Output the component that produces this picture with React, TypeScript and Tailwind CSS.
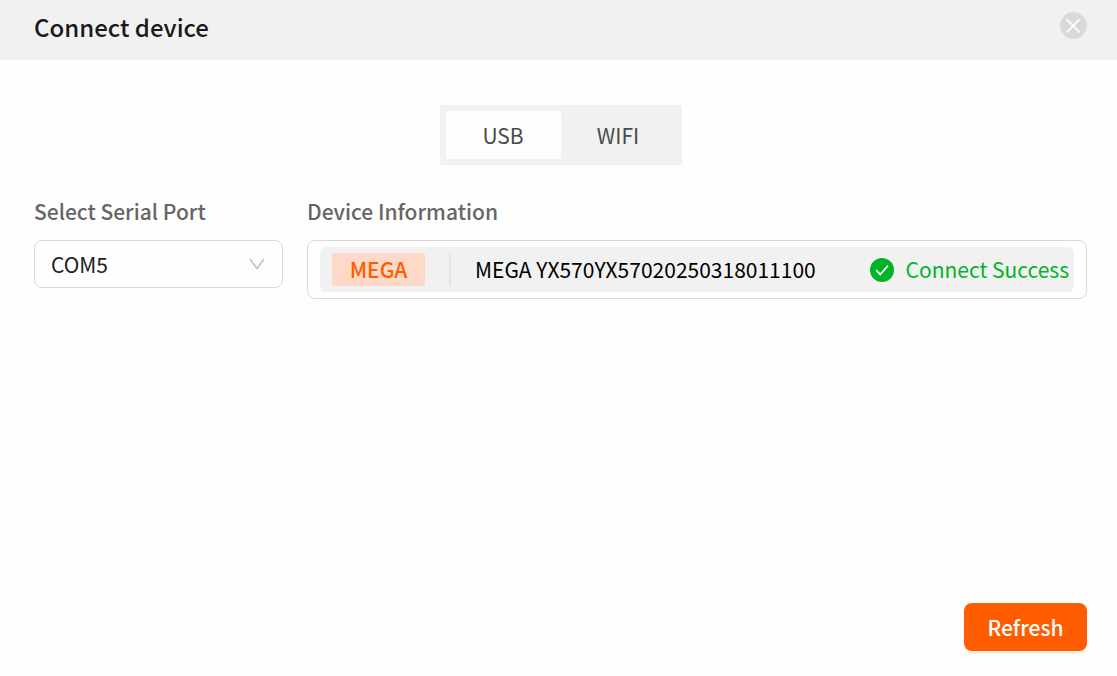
import { useState } from 'react';

const tabs = ['USB', 'WIFI'];
const ports = ['COM5'];

function CloseIcon() {
  return (
    <svg viewBox="0 0 27 27" className="size-[27px]" aria-hidden="true">
      <circle cx="13.5" cy="13.5" r="13.5" fill="#d9d9d9" />
      <path d="M6.6 7.4 19.6 20.4M19.6 7.4 6.6 20.4" stroke="#fff" strokeWidth="1.7" fill="none" />
    </svg>
  );
}

function SuccessIcon() {
  return (
    <svg viewBox="0 0 24 24" className="size-6 shrink-0" aria-hidden="true">
      <circle cx="12" cy="12" r="12" fill="#00b42a" />
      <path d="m6.2 12.2 4 4.3L18 7.6" stroke="#fff" strokeWidth="1.7" fill="none" />
    </svg>
  );
}

export default function App() {
  const [active, setActive] = useState('USB');
  const [port, setPort] = useState('COM5');

  return (
    <div className="flex min-h-screen flex-col bg-[#fefefe] font-['Noto_Sans_CJK_SC',sans-serif] text-[21px] leading-[30px]">
      <header className="flex h-[60px] items-start justify-between bg-[#f1f1f1] pt-3 pr-[30px] pl-[34px]">
        <h1 className="text-[24px] leading-[30px] font-medium text-[#1a1a1a]">Connect device</h1>
        <button type="button" aria-label="Close" className="cursor-pointer">
          <CloseIcon />
        </button>
      </header>

      <main className="flex flex-1 flex-col pt-[45px] pr-[30px] pb-[25px] pl-[34px]">
        <div className="flex self-center rounded-xs bg-[#f1f1f1] p-[6px]">
          {tabs.map((tab) => (
            <button
              key={tab}
              type="button"
              aria-pressed={active === tab}
              onClick={() => setActive(tab)}
              className={`h-12 w-[115px] cursor-pointer rounded-xs text-[#4a4a4a] ${
                active === tab ? 'bg-[#fefefe]' : ''
              }`}
            >
              {tab}
            </button>
          ))}
        </div>

        <div className="mt-[31px] flex items-start gap-6">
          <div className="flex w-[249px] shrink-0 flex-col gap-[14px]">
            <label htmlFor="port" className="font-medium text-[#666]">
              Select Serial Port
            </label>
            <div className="grid items-center">
              <select
                id="port"
                value={port}
                onChange={(e) => setPort(e.target.value)}
                className="col-start-1 row-start-1 h-12 w-full appearance-none rounded-lg border border-[#d9d9d9] bg-[#fefefe] px-4 text-[#222]"
              >
                {ports.map((p) => (
                  <option key={p}>{p}</option>
                ))}
              </select>
              <svg
                viewBox="0 0 16 12"
                className="pointer-events-none col-start-1 row-start-1 mr-[18px] h-3 w-4 justify-self-end"
                aria-hidden="true"
              >
                <path d="M1 1 8 10.5 15 1" stroke="#bfbfbf" strokeWidth="1.5" fill="none" />
              </svg>
            </div>
          </div>

          <section className="flex min-w-0 flex-1 flex-col gap-[14px]">
            <h2 className="font-medium text-[#666]">Device Information</h2>
            <div className="rounded-lg border border-[#d9d9d9] px-3 py-[6px]">
              <div className="flex h-[45px] items-center rounded-md bg-[#f1f1f1] pr-[5px] pl-3 leading-[29px]">
                <span className="flex h-[33px] w-[93px] items-center justify-center rounded-xs bg-[#ffd9c7] font-medium text-[#ff5c00]">
                  MEGA
                </span>
                <span className="ml-6 h-[33px] w-[2px] bg-[#e3e3e3]" />
                <span className="ml-6 flex-1 text-black">MEGA YX570YX57020250318011100</span>
                <span className="flex items-center gap-3 text-[#00b42a]">
                  <SuccessIcon />
                  Connect Success
                </span>
              </div>
            </div>
          </section>
        </div>

        <button
          type="button"
          className="mt-auto h-12 w-[123px] cursor-pointer self-end rounded-lg bg-[#ff5c00] font-medium text-white shadow-[0_3px_0_#fff1e8]"
        >
          Refresh
        </button>
      </main>
    </div>
  );
}
